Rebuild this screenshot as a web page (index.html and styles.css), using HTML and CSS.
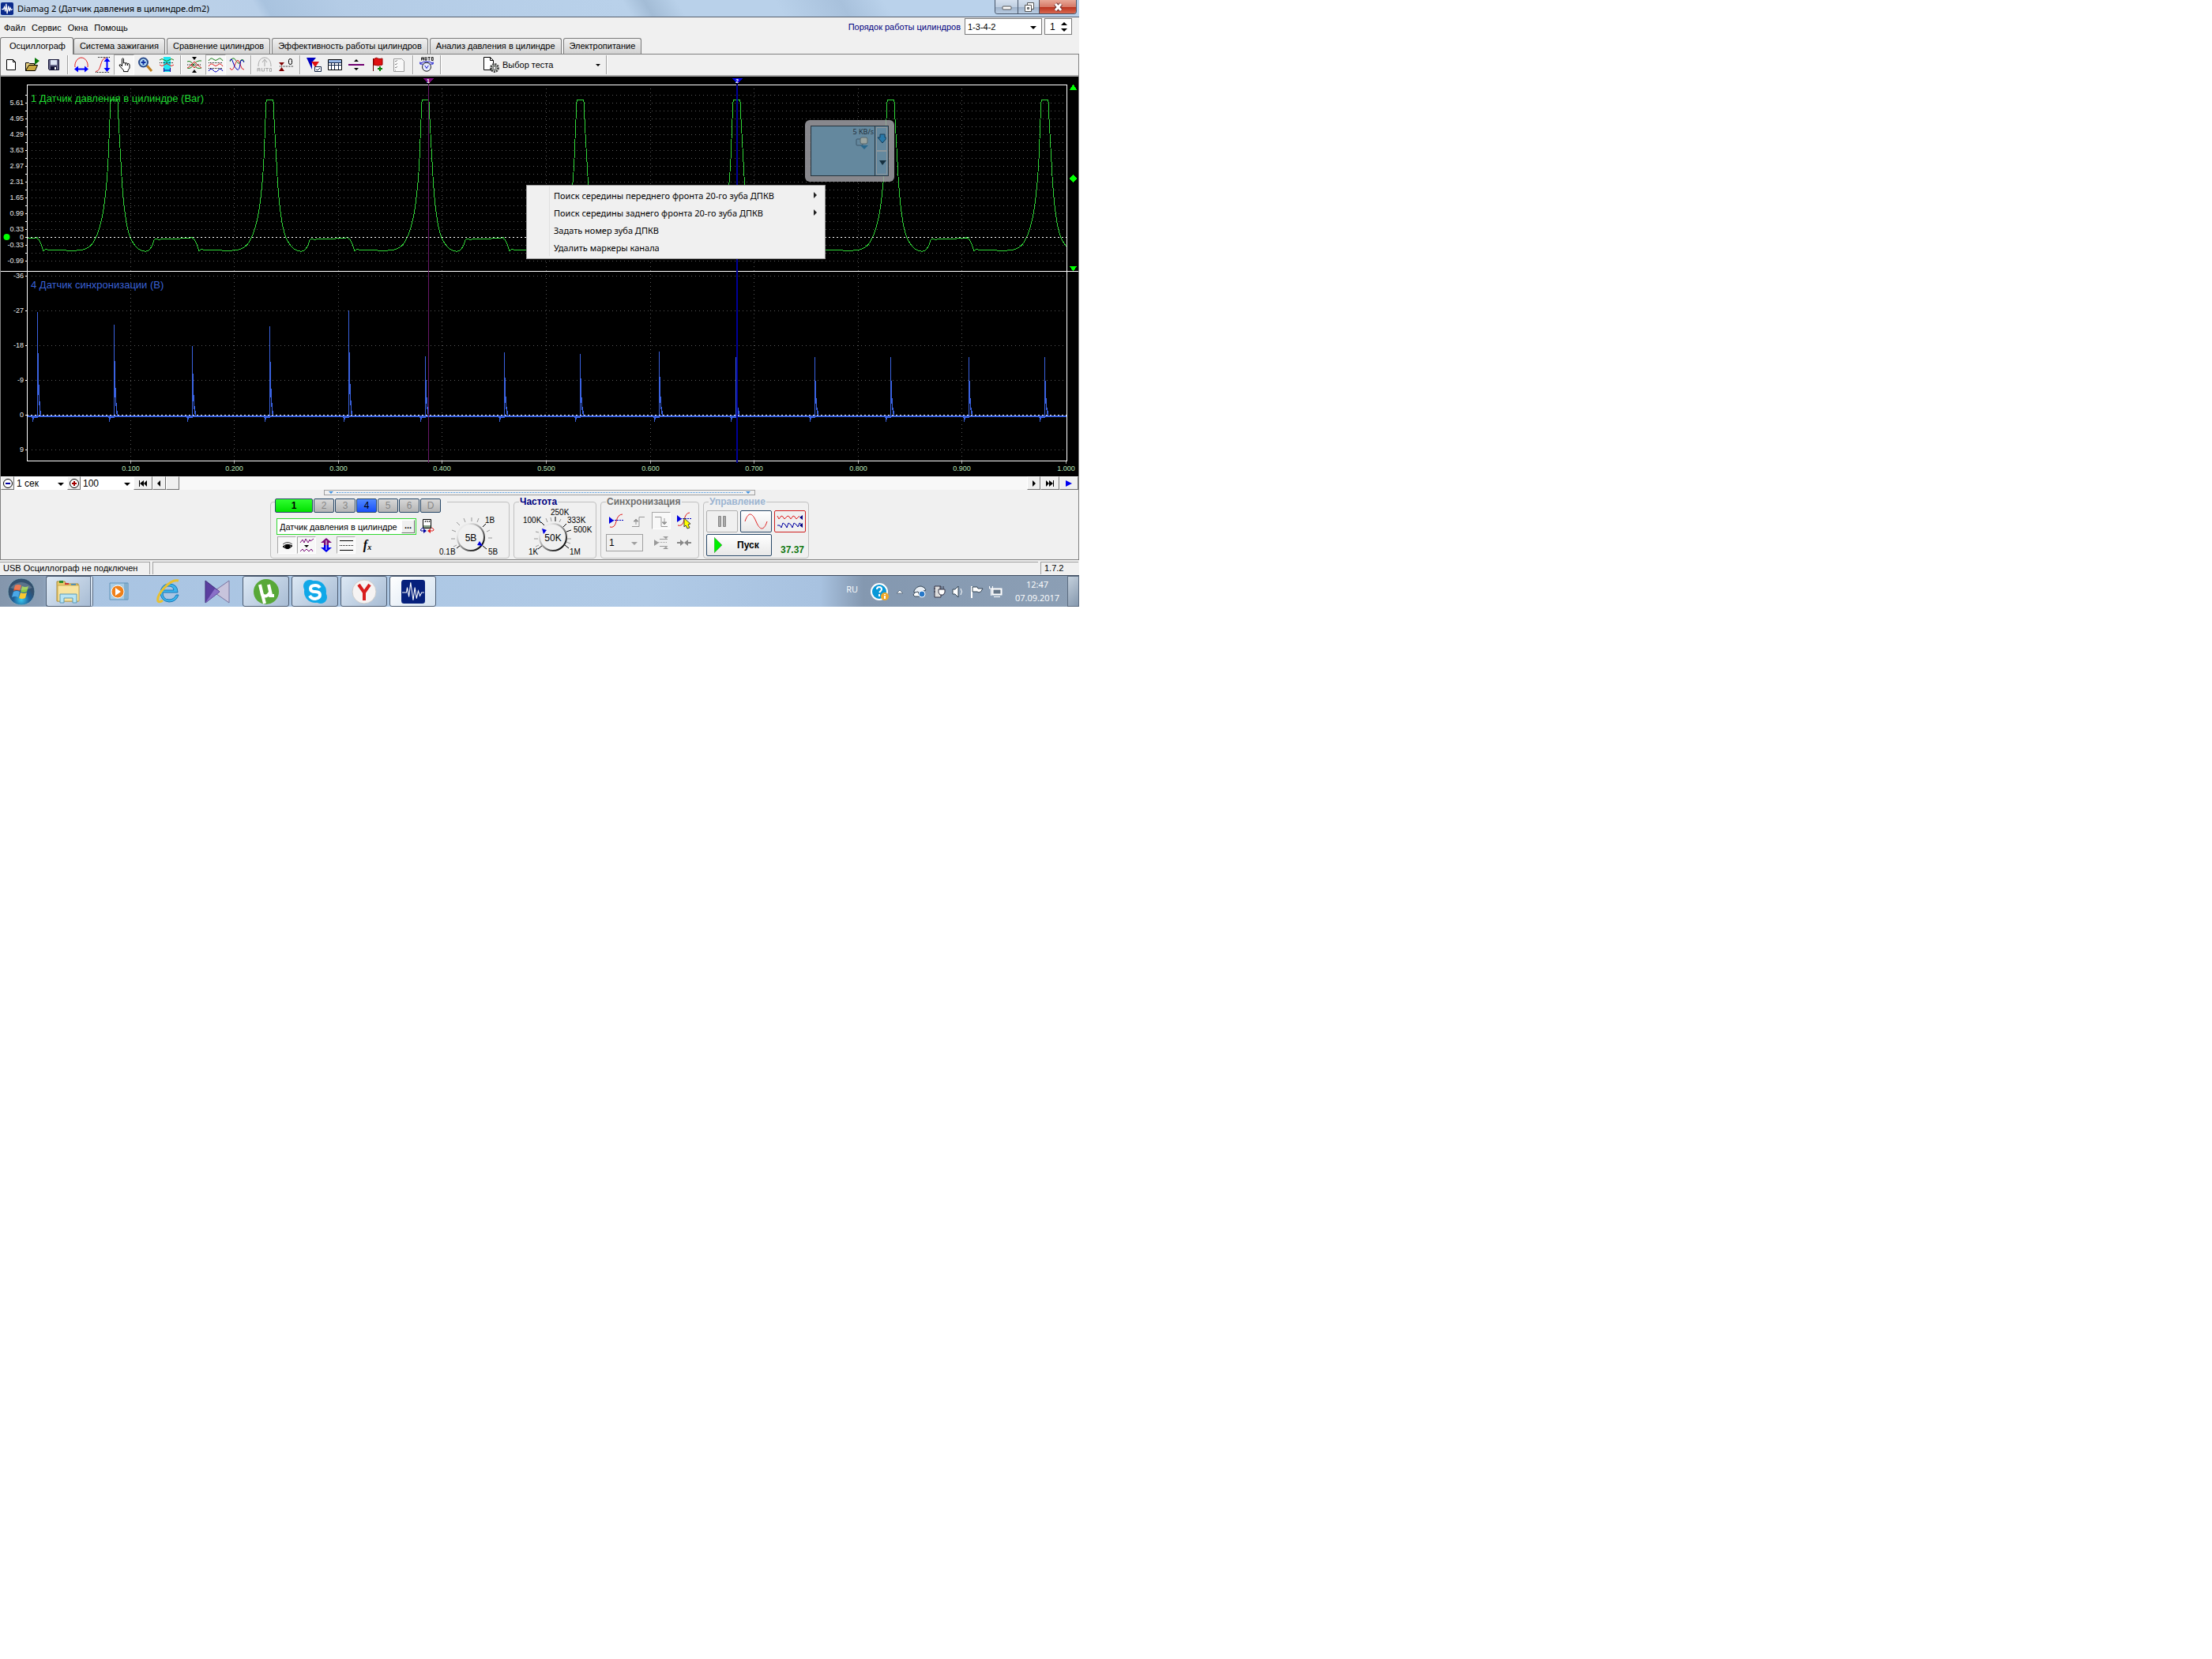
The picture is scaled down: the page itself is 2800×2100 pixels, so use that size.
FILE: index.html
```html
<!DOCTYPE html>
<html lang="ru">
  <head>
    <meta charset="UTF-8" />
    <title>Diamag 2</title>
    <link rel="stylesheet" href="styles.css">
  </head>

  <body>
    <div class="desktop">
      <div class="titleBar">
        <svg class="appIcon" width="16" height="16" viewBox="0 0 28 28">
          <rect width="28" height="28" rx="3" fill="#0a2a8c" />
          <path d="M2 15h4l2-5 2 10 2-17 2 22 3-17 2 12 2-8 2 5 3-2" fill="none" stroke="#fff" stroke-width="2" />
        </svg>
        <div class="titleText">Diamag 2 (Датчик давления в цилиндре.dm2)</div>
        <div class="winButtons">
          <button class="winMin" aria-label="Свернуть"><svg width="13" height="11"><rect x="1" y="5" width="11" height="4" rx="1" fill="#fff" stroke="#555" /></svg></button>
          <button class="winMax" aria-label="Развернуть"><svg width="13" height="12"><path d="M4.500 .500h8v8h-8z" fill="#fff" stroke="#555" /><path d="M1.500 3.500h8v8h-8z" fill="#fff" stroke="#555" /><path d="M4.500 6.500h2v2h-2z" fill="#9ab" stroke="#555" /></svg></button>
          <button class="winClose" aria-label="Закрыть"><svg width="13" height="12"><path d="M3 2l7 8M10 2l-7 8" stroke="#6a3030" stroke-width="5" /><path d="M3 2l7 8M10 2l-7 8" stroke="#fff" stroke-width="3" /></svg></button>
        </div>
      </div>

      <div class="menuBar">
        <div class="menuItems">
          <a href="#">Файл</a>
          <a href="#">Сервис</a>
          <a href="#">Окна</a>
          <a href="#">Помощь</a>
        </div>
        <label class="orderLabel" for="order">Порядок работы цилиндров</label>
        <div class="selectBox orderBox">
          <select id="order"><option>1-3-4-2</option></select>
        </div>
        <div class="spinBox">
          <input type="text" value="1" aria-label="Номер цилиндра" />
          <svg width="8" height="14"><path d="M0 5l4-4 4 4zM0 9l4 4 4-4z" fill="#000" /></svg>
        </div>
      </div>

      <div class="tabs">
        <button class="tab active">Осциллограф</button>
        <button class="tab">Система зажигания</button>
        <button class="tab">Сравнение цилиндров</button>
        <button class="tab">Эффективность работы цилиндров</button>
        <button class="tab">Анализ давления в цилиндре</button>
        <button class="tab">Электропитание</button>
      </div>

      <div class="window">
        <div class="toolBar">
          <button class="tool" aria-label="Новый"><svg viewBox="0 0 20 20"><path d="M4.500 3.500h8l3 3v10h-11z" fill="#fff" stroke="#000" /><path d="M12.500 3.500v3h3" fill="none" stroke="#000" /></svg></button>
          <button class="tool" aria-label="Открыть"><svg viewBox="0 0 20 20"><path d="M1.500 17.500v-10h4l1 1h6v3" fill="#e8d080" stroke="#000" /><path d="M1.500 17.500l4-7h11l-3 7z" fill="#c8a840" stroke="#000" /><path d="M13 1v9l6-5z" fill="#087808" /></svg></button>
          <button class="tool" aria-label="Сохранить"><svg viewBox="0 0 20 20"><path d="M3.500 3.500h13v13h-12l-1-1z" fill="#668" stroke="#113" /><path d="M6 4h8v6H6z" fill="#dde4f4" /><path d="M6 12h8v4H6z" fill="#113" /><path d="M11 13h2v3h-2z" fill="#fff" /></svg></button>
          <div class="sep"></div>
          <button class="tool" aria-label="Период"><svg viewBox="0 0 20 20"><path d="M2 13c-1-6 3-12 8-12s9 6 8 12" fill="none" stroke="#e02020" /><path d="M3 15.500h14" stroke="#00f" stroke-width="2" /><path d="M1 15.500l5-4v8zM19 15.500l-5-4v8z" fill="#00f" /></svg></button>
          <button class="tool" aria-label="Амплитуда"><svg viewBox="0 0 20 20"><path d="M1 18.500c8 0 5-17 13-17" fill="none" stroke="#e02020" /><path d="M4 .500h15M1 19.500h17" stroke="#000" stroke-dasharray="1 1" /><path d="M15.500 4v12" stroke="#00f" stroke-width="2" /><path d="M15.500 1l-4 5h8zM15.500 19l-4-5h8z" fill="#00f" /></svg></button>
          <button class="tool checked" aria-label="Рука"><svg viewBox="0 0 20 20"><path d="M7.500 12V2.500q1-1.500 2 0V8q1-1 2.500 0 1-.8 2.500.6 1.500-.5 2.500 1v4.500l-2 3v1.500H9.500V17l-5.500-6q0-2 2-1z" fill="#fff" stroke="#000" /><path d="M12 8v3M14.500 9v2" stroke="#000" /></svg></button>
          <button class="tool" aria-label="Лупа"><svg viewBox="0 0 20 20"><path d="M12 11l6 7" stroke="#c08020" stroke-width="3" /><circle cx="7.500" cy="7" r="5.500" fill="#b8e0f8" stroke="#2a4a8a" stroke-width="2" /><path d="M4.500 7h6M7.500 4v6" stroke="#1030a0" stroke-width="2" /></svg></button>
          <button class="tool" aria-label="Интервал"><svg viewBox="0 0 20 20"><path d="M6 0h9v19H6z" fill="#20e8f0" /><path d="M1 4q3-3 6 0t6 0 6 0" fill="none" stroke="#188018" /><path d="M1 10q3 3 6 0t6 0 6 0" fill="none" stroke="#e02020" /><path d="M1 7.500h18" stroke="#000" stroke-dasharray="1 1" /><path d="M6 17h9M6.500 14v5M14.500 14v5" stroke="#0000a0" /></svg></button>
          <div class="sep"></div>
          <button class="tool" aria-label="Центр"><svg viewBox="0 0 20 20"><path d="M1 6q4-2 8 4t10 4M1 14q4 2 8-4t10-5" fill="none" stroke="#188018" /><path d="M1 14q3-1 5-4l4-4 4 4 5 4M6 10l4 4 4-4" fill="none" stroke="#e02020" /><path d="M1 10h18" stroke="#000" stroke-dasharray="1 1" /><path d="M7 0h6l-3 4zM7 20h6l-3-4z" fill="#000" /></svg></button>
          <button class="tool checked" aria-label="Раздельно"><svg viewBox="0 0 20 20"><path d="M1 5q3-5 6-2t6 0 6 2" fill="none" stroke="#188018" /><path d="M1 12q3-5 6-2t6 0 6 2" fill="none" stroke="#e02020" /><path d="M1 18q3-5 6-1t6 0 6 1" fill="none" stroke="#0000c0" /><path d="M1 7.500h18M1 14.500h18" stroke="#000" stroke-dasharray="1 1" /></svg></button>
          <button class="tool" aria-label="Наложение"><svg viewBox="0 0 20 20"><path d="M1 6q4-8 8-1t6-1q3-2 4 2" fill="none" stroke="#188018" /><path d="M1 14q3 6 6-3t5-6 3 7 4 4" fill="none" stroke="#e02020" /><path d="M1 5q2-5 4 2t5 9 4-7 5-2" fill="none" stroke="#0000c0" /></svg></button>
          <div class="sep"></div>
          <button class="tool" aria-label="Авто"><svg viewBox="0 0 20 20"><path d="M2 12c0-7 3-11 8-11s8 4 8 11M10 4v8M7 7l3-4 3 4M1 18.500v-4h3v4M1 16.500h3M6.500 14v4h3v-4M11 14.500h4M13 14.500v4M16.500 14.500h2v4h-2z" fill="none" stroke="#a8a8a8" /></svg></button>
          <button class="tool" aria-label="Ноль"><svg viewBox="0 0 20 20"><path d="M1 7h7l-3.500 4zM1 18h7l-3.500-5z" fill="#800000" /><path d="M2 12h18" stroke="#000" stroke-dasharray="1 1" /><rect x="13.500" y="2.500" width="4" height="7" rx="2" fill="none" stroke="#000" /></svg></button>
          <div class="sep"></div>
          <button class="tool" aria-label="Маркеры"><svg viewBox="0 0 20 20"><path d="M1 1h12L8 7v9z" fill="#0000c0" /><path d="M7 6h10l-5 7z" fill="#e01010" /><path d="M11.500 12.500h8v6h-8z" fill="#fff" stroke="#124" /><path d="M13 16l2 1 3-3" fill="none" stroke="#124" /></svg></button>
          <button class="tool" aria-label="Таблица"><svg viewBox="0 0 20 20"><path d="M1.500 3.500h17v13h-17z" fill="#fff" stroke="#000" /><path d="M2 4h16v3H2z" fill="#98b8e8" /><path d="M1 7.500h18M1 10.500h18M5.500 7v9M9.500 7v9M14.500 7v9" stroke="#124" /></svg></button>
          <button class="tool" aria-label="Разделить"><svg viewBox="0 0 20 20"><path d="M0 9h20v2H0z" fill="#700070" /><path d="M7 6h6l-3-3zM7 14h6l-3 3z" fill="#000" /></svg></button>
          <button class="tool" aria-label="Флаг"><svg viewBox="0 0 20 20"><path d="M4.500 2v16" stroke="#600" /><path d="M5 3q4-3 5-1 3 1 6 0v8q-5 2-11 0z" fill="#e01010" stroke="#900" /><path d="M13 12v6M10 15h6" stroke="#088008" stroke-width="2" /></svg></button>
          <button class="tool" aria-label="Список"><svg viewBox="0 0 20 20"><path d="M3.500 2.500h10l3 3v13h-13z" fill="#f8f8f8" stroke="#999" /><path d="M5 5l1 1 2-2M5 9l1 1 2-2M5 13l1 1 2-2M5 17l1 0" fill="none" stroke="#888" /></svg></button>
          <div class="sep"></div>
          <button class="tool" aria-label="Авто вольт"><svg viewBox="0 0 20 22"><path d="M3 5V1h3v4M3 3h3M8 0v4.500h2V0M12 .500h3M13.500 .500V5M17 .500h2V5h-2z" fill="none" stroke="#000" /><circle cx="10" cy="14" r="6" fill="#e8ecff" stroke="#000" /><path d="M7.500 12l2.500 4 2.500-4" fill="none" stroke="#0000c0" /><path d="M1 9q9-5 18 0M1 7v3h4M19 7v3h-4" fill="none" stroke="#00c" /></svg></button>
          <div class="sep"></div>
          <button class="testButton" aria-haspopup="true">
            <svg width="20" height="20" viewBox="0 0 20 20"><path d="M.500 .500h8l4 4v12H.500z" fill="#fff" stroke="#000" /><path d="M8.500 .500v4h4" fill="none" stroke="#000" /><circle cx="14" cy="14" r="4.500" fill="#d8e0d8" stroke="#444" stroke-width="3" stroke-dasharray="2 1" /><circle cx="14" cy="14" r="2" fill="#fff" stroke="#444" /></svg>
            <span>Выбор теста</span>
          </button>
          <div class="sep"></div>
        </div>

        <div class="scope">
          <svg class="plot" viewBox="0 97 1364 506" shape-rendering="crispEdges">
            <defs>
              <clipPath id="plotClip"><rect x="34" y="107" width="1315" height="476" /></clipPath>
              <path id="cycle" d="M-101 300l5 3 3 6 3 9 3-3 4 2 4-1 5 1 6-1 7 1h13q18 0 24-16 12-22 16-100l2-50 1-22 1-3h7l1 3 1 22 3 54q4 84 14 100 8 14 18 13 6 0 10-14 3-3 6 0 3-2 8-1l19-1q13 0 16-2" />
            </defs>
            <g id="grid"></g>
            <g id="pressure" clip-path="url(#plotClip)"></g>
            <g id="sync" clip-path="url(#plotClip)"></g>
            <path d="M33 300.500h1316M33 525.500h1316" stroke="#fff" stroke-dasharray="2 3" />
            <path d="M33.500 583V107.500h1316V583M0 343.500h1364M33 583.500h1317" stroke="#fff" fill="none" />
            <path d="M541.500 107v479" stroke="#6a186a" />
            <path d="M932 107v479" stroke="#000098" stroke-width="2" />
            <path d="M534 99h15l-7.500 7z" fill="#780878" />
            <path d="M925 99h15l-7.500 7z" fill="#0000e0" />
            <text class="markNo" x="541" y="105">1</text>
            <text class="markNo" x="932" y="105">2</text>
            <path d="M1357.500 107l5 7h-10zM1357.500 343l5-6h-10zM1357.500 221l5 5-5 5-5-5z" fill="#00ff00" />
            <circle cx="7.500" cy="300" r="4" fill="#00ff00" shape-rendering="auto" />
            <text class="chTitle ch1" x="38" y="129">1 Датчик давления в цилиндре (Bar)</text>
            <text class="chTitle ch4" x="38" y="365">4 Датчик синхронизации (В)</text>
          </svg>

          <div class="gadget">
            <div class="gadgetScreen">
              <div class="gadgetSpeed">5 KB/s</div>
              <svg width="17" height="16"><rect x="1" y="3" width="8" height="8" rx="1" fill="none" stroke="#3c5668" /><rect x="6" y="1" width="9" height="8" rx="2" fill="#9aa4a0" stroke="#58686c" /><path d="M6 11h10l-5 5z" fill="#28678c" /></svg>
            </div>
            <div class="gadgetSide">
              <svg width="14" height="28"><path d="M4 8h6v4h3l-6 7-6-7h3z" fill="#2878a8" stroke="#143c58" /></svg>
              <svg width="14" height="28"><path d="M3 11h9l-5 6z" fill="#16303f" /></svg>
            </div>
          </div>

          <ul class="contextMenu">
            <li><a href="#">Поиск середины переднего фронта 20-го зуба ДПКВ</a><span class="more"></span></li>
            <li><a href="#">Поиск середины заднего фронта 20-го зуба ДПКВ</a><span class="more"></span></li>
            <li><a href="#">Задать номер зуба ДПКВ</a></li>
            <li><a href="#">Удалить маркеры канала</a></li>
          </ul>
        </div>

        <div class="scaleBar">
          <button class="scaleButton" aria-label="Уменьшить"><svg width="14" height="14"><circle cx="7" cy="7" r="5.500" fill="#fff" stroke="#000" /><path d="M4 7h6" stroke="#0000a0" stroke-width="2" /></svg></button>
          <div class="selectBox scaleBox"><select aria-label="Длительность"><option>1 сек</option></select></div>
          <button class="scaleButton" aria-label="Увеличить"><svg width="14" height="14"><circle cx="7" cy="7" r="5.500" fill="#fff" stroke="#000" /><path d="M4 7h6M7 4v6" stroke="#a00000" stroke-width="2" /></svg></button>
          <div class="selectBox scaleBox"><select aria-label="Масштаб"><option>100</option></select></div>
          <button class="scrollButton wide" aria-label="В начало"><svg width="12" height="8"><path d="M1 0h1v8H1zM2 4l5-4v8zM7 4l4-4v8z" fill="#000" /></svg></button>
          <button class="scrollButton" aria-label="Назад"><svg width="6" height="8"><path d="M0 4l4-4v8z" fill="#000" /></svg></button>
          <div class="scrollTrack"><div class="scrollThumb"></div></div>
          <button class="scrollButton" aria-label="Вперёд"><svg width="6" height="8"><path d="M5 4L1 0v8z" fill="#000" /></svg></button>
          <button class="scrollButton wide" aria-label="В конец"><svg width="12" height="8"><path d="M10 0h1v8h-1zM10 4L5 0v8zM5 4L1 0v8z" fill="#000" /></svg></button>
          <button class="scrollButton wide" aria-label="Проиграть"><svg width="10" height="8"><path d="M9 4L1 0v8z" fill="#0000f0" /></svg></button>
        </div>

        <div class="panel">
          <div class="splitter"><i></i><span></span><i></i></div>
          <div class="groups">
            <div class="group channelGroup">
              <div class="channelLeft">
                <div class="channels">
                  <button class="channel on1">1</button>
                  <button class="channel">2</button>
                  <button class="channel">3</button>
                  <button class="channel on4">4</button>
                  <button class="channel">5</button>
                  <button class="channel">6</button>
                  <button class="channel">D</button>
                </div>
                <div class="sensorRow">
                  <div class="sensorBox">
                    <input type="text" value="Датчик давления в цилиндре" aria-label="Датчик" />
                    <button class="dots" aria-label="Выбрать датчик">...</button>
                  </div>
                  <svg width="20" height="20"><path d="M4.500 1.500h10v11h-10z" fill="#fff" stroke="#000" /><path d="M5 9h9v3H5z" fill="#89a089" /><path d="M7 5l1-2M10 3v2M13 3l-1 2" stroke="#000" /><path d="M5 12q-5 2-3 4h4" fill="none" stroke="#0000a0" /><path d="M5 13l4 3-4 3z" fill="#0000a0" /><path d="M15 12q5 2 2 4h-3" fill="none" stroke="#e02020" /><path d="M14 13l-4 3 4 3z" fill="#e02020" /></svg>
                </div>
                <div class="viewRow">
                  <button class="view checked" aria-label="Показать"><svg width="20" height="20"><path d="M5 12q5-5 12-1-5 6-12 1z" fill="#555" stroke="#000" /><circle cx="11" cy="12" r="3" fill="#000" /><path d="M5 9q6-5 12 0" fill="none" stroke="#444" /></svg></button>
                  <button class="view checked" aria-label="Фильтр"><svg width="20" height="20"><path d="M2 7l3-4 2 4 2-5 3 5 2-4 1 2 4-3M2 18l3-3 2 3 3-3 3 3 3-3 2 3" fill="none" stroke="#780878" /><path d="M7 10h6l-3 3z" fill="#000" /></svg></button>
                  <button class="view" aria-label="Инверсия"><svg width="20" height="20"><path d="M10 1l7 6h-4v3H7V7H3z" fill="#780878" /><path d="M10 19l7-6h-4v-3H7v3H3z" fill="#0000f0" /><path d="M10 4v12" stroke="#fff" /></svg></button>
                  <button class="view checked" aria-label="Линии"><svg width="20" height="20"><path d="M2 4.500h17M2 16.500h17" stroke="#000" /><path d="M2 10.500h17" stroke="#000" stroke-dasharray="1 1" /></svg></button>
                  <button class="view fx">f<small>x</small></button>
                </div>
              </div>
              <svg class="knob" width="92" height="69" viewBox="553 636 92 69">
                <defs>
                  <linearGradient id="knobRing" x1="0" y1="0" x2="1" y2="1">
                    <stop offset="0.2" stop-color="#e8e8e8" /><stop offset="0.6" stop-color="#777" /><stop offset="0.9" stop-color="#000" />
                  </linearGradient>
                </defs>
                <g stroke="#999"><path d="M578 690l-4 2M576 682h-5M577 673l-5-2M582 665l-4-4M589 661l-2-5M597 660v-5M604 661l2-5M616 673l4-2M618 681h5" /></g>
                <path d="M611 667l4-4M578 694l5-4M611 691l5 4" stroke="#000" />
                <circle cx="596" cy="680" r="17" fill="#f0f0f0" stroke="url(#knobRing)" stroke-width="2" />
                <path d="M604 690l3-5 4 6z" fill="#0000e0" />
                <text class="knobValue" x="596" y="685">5B</text>
                <text x="614" y="662">1B</text><text x="556" y="702">0.1B</text><text x="618" y="702">5B</text>
              </svg>
            </div>

            <fieldset class="group freqGroup">
              <legend>Частота</legend>
              <svg class="knob" width="103" height="63" viewBox="651 642 103 63">
                <g stroke="#999"><path d="M682 690l-4 2M681 682h-5M682 674l-4-1M693 661l-2-5M698 660l-1-5M708 661l2-4M718 682h5M717 686l5 2" /></g>
                <path d="M703 660v-6M713 667l4-4M717 673l6-2M715 690l5 4M689 665l-4-4M687 690l-6 5" stroke="#000" />
                <circle cx="700" cy="680" r="17" fill="#f0f0f0" stroke="url(#knobRing)" stroke-width="2" />
                <path d="M686 669l6 2-4 5z" fill="#0000e0" />
                <text class="knobValue" x="700" y="685">50K</text>
                <text x="662" y="662">100K</text><text x="697" y="652">250K</text><text x="718" y="662">333K</text><text x="726" y="674">500K</text><text x="721" y="702">1M</text><text x="669" y="702">1K</text>
              </svg>
            </fieldset>

            <fieldset class="group syncGroup">
              <legend>Синхронизация</legend>
              <button class="sync" aria-label="Порог"><svg width="20" height="20"><path d="M3 18q6 2 8-7t8-9" fill="none" stroke="#e02020" /><path d="M6 9.500h14" stroke="#0000c0" stroke-dasharray="2 1" /><path d="M2 5v9l6-4z" fill="#0000e0" /></svg></button>
              <button class="sync" aria-label="По фронту"><svg width="20" height="20"><path d="M2 17.500h9v-12h7" fill="none" stroke="#999" /><path d="M7 8v7M4 11l3-3 3 3z" fill="#999" stroke="#999" /></svg></button>
              <button class="sync checked" aria-label="По спаду"><svg width="20" height="20"><path d="M2 5.500h8v12h8" fill="none" stroke="#999" /><path d="M14 7v7M11 12l3 3 3-3z" fill="#999" stroke="#999" /></svg></button>
              <button class="sync" aria-label="Указать порог"><svg width="20" height="22"><path d="M2 17q6 2 8-7t7-9" fill="none" stroke="#e02020" /><path d="M5 8.500h14" stroke="#0000c0" stroke-dasharray="2 1" /><path d="M1 4v9l6-4z" fill="#0000e0" /><path d="M10 8l8 7-3 1 2 4-3 1-2-4-2 2z" fill="#ffff00" stroke="#443" /></svg></button>
              <div class="selectBox syncBox"><select aria-label="Канал синхронизации" disabled><option>1</option></select></div>
              <button class="sync" aria-label="Уровень"><svg width="20" height="20"><path d="M8 5.500h10M8 14.500h10" stroke="#999" /><path d="M6 9.500h12" stroke="#999" stroke-dasharray="1 1" /><path d="M1 6v8l6-4zM12 2h7l-3 3zM12 18h7l-3-3z" fill="#999" /></svg></button>
              <button class="sync" aria-label="Сжать"><svg width="20" height="20"><path d="M1 10h6M13 10h6" stroke="#888" stroke-width="2" /><path d="M5 6v8l5-4zM15 6v8l-5-4z" fill="#888" /></svg></button>
            </fieldset>

            <fieldset class="group controlGroup">
              <legend>Управление</legend>
              <button class="ctl" aria-label="Пауза" disabled><svg width="12" height="16"><path d="M1.500 1.500h3v13h-3zM7.500 1.500h3v13h-3z" fill="#aaa" stroke="#888" /></svg></button>
              <button class="ctl active" aria-label="Синус"><svg width="30" height="22"><path d="M1 11C5-1 10-1 15 11s10 12 14 0" fill="none" stroke="#e02020" /></svg></button>
              <button class="ctl red" aria-label="Многоканальный"><svg width="34" height="20"><path d="M1 3l2 4 3-4 2 1 2 3 4-4 2 1 2 3 3-4 2 1 2 3 4-4" fill="none" stroke="#e02020" /><path d="M1 15h3l2 3 2-6 3 2 2 4 2-6 3 2 2 4 2-6 3 2 2 3 2-5 3 2" fill="none" stroke="#0000a0" /><path d="M33 2v6l-4-3zM33 12v6l-4-3z" fill="#000080" /></svg></button>
              <button class="ctl active start"><svg width="10" height="20"><path d="M0 0v20l10-10z" fill="#00f000" stroke="#7a7" /></svg><span>Пуск</span></button>
              <div class="counter">37.37</div>
            </fieldset>
          </div>
        </div>
      </div>

      <div class="statusBar">
        <div class="statusText">USB Осциллограф не подключен</div>
        <div class="statusEmpty"></div>
        <div class="statusVersion">1.7.2</div>
      </div>

      <div class="taskBar">
        <button class="startButton" aria-label="Пуск">
          <svg width="36" height="38"><defs><radialGradient id="orb" cx="0.5" cy="0.8"><stop offset="0" stop-color="#38c8f0" /><stop offset="0.6" stop-color="#1f5f98" /><stop offset="1" stop-color="#33506e" /></radialGradient></defs><circle cx="18" cy="19" r="17" fill="url(#orb)" stroke="#8ab" /><path d="M10 11q4-2 8 0l-2 7q-4-2-8 0z" fill="#e8582a" /><path d="M19 12q4 2 8 0l-2 7q-4 2-8 0z" fill="#8cc63e" /><path d="M8 19q4-2 8 0l-2 7q-4-2-8 0z" fill="#4aa8e8" /><path d="M17 20q4 2 8 0l-2 7q-4 2-8 0z" fill="#fbc82e" /><path d="M4 14q14-14 28 0Q18 20 4 14z" fill="#fff" opacity=".2" /></svg>
        </button>
        <button class="task running stacked" aria-label="Проводник"><svg width="34" height="32"><path d="M2 3h10l2 3h15v22H2z" fill="#e9c96a" stroke="#a88a3a" /><path d="M5 2h5v3H5z" fill="#2a8a2a" /><path d="M12 5h5v2h-5z" fill="#c33" /><path d="M20 6h6v2h-6z" fill="#38c" /><path d="M3 8h27v20H3z" fill="#f8e4a0" stroke="#c8a850" /><path d="M6 30V19h21v11h-5v-6H11v6z" fill="#b8e4f4" stroke="#5a9ab8" /></svg></button>
        <button class="task" aria-label="Проигрыватель"><svg width="30" height="30"><path d="M3 4h23v21H3z" fill="#a8cce4" stroke="#5f92b8" /><path d="M22 4v21M24 4v21" stroke="#5f92b8" /><circle cx="13" cy="15" r="8" fill="#f08018" stroke="#fff" /><path d="M10 10v10l7-5z" fill="#fff" /></svg></button>
        <button class="task" aria-label="Internet Explorer"><svg width="32" height="32"><path d="M26 20q-3 6-9 6-8 0-8-9h19q0-11-11-11-9 0-11 10 0 12 11 13 9 0 12-9zM10 14q1-5 7-5 5 0 6 5z" fill="#3cb4ec" stroke="#1878b8" /><path d="M29 2q-8-2-18 9T3 28q2 2 6-1" fill="none" stroke="#e8c030" stroke-width="3" /></svg></button>
        <button class="task" aria-label="KMPlayer"><svg width="32" height="30"><path d="M31 1v28L11 15z" fill="#c8c4dc" stroke="#7a74a0" /><path d="M1 1v28l18-14z" fill="#5b3fa0" stroke="#3d2a78" /><path d="M1 29l18-14-6-4z" fill="#8a70c8" /></svg></button>
        <button class="task running" aria-label="uTorrent"><svg width="34" height="34"><circle cx="17" cy="17" r="16" fill="#58a838" /><path d="M9 8l3 13q5 4 9-2l1 3h5M20 8l3 13M12 20l3 12" fill="none" stroke="#fff" stroke-width="4" /></svg></button>
        <button class="task running" aria-label="Skype"><svg width="32" height="34"><circle cx="16" cy="17" r="14" fill="#10a8e8" /><circle cx="9" cy="10" r="8" fill="#10a8e8" /><circle cx="23" cy="24" r="8" fill="#10a8e8" /><path d="M22 12q-2-3-6-3-6 0-6 4t6 4 6 4-6 5q-5 0-7-4" fill="none" stroke="#fff" stroke-width="4" /></svg></button>
        <button class="task running" aria-label="Яндекс"><svg width="32" height="32"><circle cx="16" cy="16" r="15" fill="#f6f3f3" stroke="#ccc" /><path d="M9 7l7 10 7-10M16 16v11" fill="none" stroke="#d81c1c" stroke-width="4" /></svg></button>
        <button class="task running current" aria-label="Diamag 2"><svg width="30" height="30" viewBox="0 0 28 28"><rect width="28" height="28" rx="3" fill="#06207c" /><path d="M1 15h5l1-6 2 11 2-17 3 21 2-15 2 13 2-9 2 6 2-4h3" fill="none" stroke="#fff" stroke-width="1" /></svg></button>

        <div class="tray">
          <div class="lang">RU</div>
          <svg class="help" width="24" height="24"><circle cx="11" cy="12" r="10" fill="#0898d8" stroke="#fff" stroke-width="2" /><path d="M8 9q0-3 3-3t3 3q0 1-3 4M11 15v3" fill="none" stroke="#fff" stroke-width="2" /><circle cx="18" cy="18" r="5" fill="#f0a828" /><path d="M18 15v1M18 17v4" stroke="#fff" stroke-width="2" /></svg>
          <svg class="caret" width="8" height="20"><path d="M0 12l4-4 4 4z" fill="#fff" stroke="#678" /></svg>
          <svg width="18" height="20"><path d="M2 9q3-6 9-6 5 1 6 5l-8 3H2z" fill="#e8eef4" stroke="#345" /><path d="M1 14q1-4 6-4l2 6H3z" fill="#fff" stroke="#345" /><circle cx="12" cy="13" r="4" fill="#2878c8" stroke="#fff" /></svg>
          <svg width="18" height="20"><path d="M4 3h8v14H4zM3 6h2M3 10h2" fill="#ddd" stroke="#334" /><path d="M9 7h8v4l-2 3h-4l-2-3zM11 3v4M15 3v4" fill="#fff" stroke="#334" /></svg>
          <svg width="18" height="20"><path d="M3 7h3l4-4v14l-4-4H3z" fill="#fff" stroke="#345" /><path d="M13 6q3 4 0 8" fill="none" stroke="#fff" /></svg>
          <svg width="18" height="20"><path d="M3 3v15" stroke="#fff" stroke-width="2" /><path d="M4 4h6l1 2h6q-2 5-5 5l-2-1H4z" fill="#fff" stroke="#345" /></svg>
          <svg width="18" height="20"><path d="M5.500 6.500h11v7h-11z" fill="#678" stroke="#fff" stroke-width="2" /><path d="M7 16.500h8" stroke="#fff" /><path d="M1.500 3v3h4V3M3.500 6v9" fill="none" stroke="#fff" /></svg>
          <div class="clock">12:47<br>07.09.2017</div>
          <button class="showDesktop" aria-label="Свернуть все окна"></button>
        </div>
      </div>
    </div>
    <script type="text/javascript" src="scope.js"></script>
  </body>
</html>
```

FILE: styles.css
```css
body,
ul,
li,
fieldset {
  margin: 0;
  padding: 0;
}

body {
  background: #ffffff;
  font-family: "Liberation Sans", Arial, sans-serif;
  font-size: 11px;
  color: #000000;
}

* {
  box-sizing: border-box;
}

button,
input,
select {
  margin: 0;
  padding: 0;
  border: 0;
  background: none;
  font-family: inherit;
  font-size: inherit;
  color: inherit;
}

svg {
  display: block;
  flex: none;
}

a {
  color: inherit;
  text-decoration: none;
}

.desktop {
  max-width: 1366px;
  background: #f0f0f0;
}

/* заголовок окна */
.titleBar {
  display: flex;
  align-items: flex-start;
  height: 22px;
  padding-left: 1px;
  background: linear-gradient(60deg, #c4d6ea 0, #b8cfe8 24%, #a9c3df 25%, #b4cce6 32%, #b9d1ea 58%, #a3bcd6 60%, #b9d1ea 63%, #b9d1ea 72%, #a8c1dc 78%, #bad2eb 82%);
  border-bottom: 1px solid #56606e;
}

.appIcon {
  margin-top: 3px;
}

.titleText {
  flex: 1;
  padding-left: 5px;
  line-height: 22px;
  font-family: "Noto Sans", sans-serif;
}

.winButtons {
  display: flex;
  height: 18px;
  margin-right: 3px;
  border: 1px solid #48566a;
  border-top: 0;
  border-radius: 0 0 4px 4px;
  overflow: hidden;
}

.winButtons button {
  display: flex;
  align-items: center;
  justify-content: center;
  width: 28px;
  background: linear-gradient(#d4e0ee 0, #c0cfe2 50%, #9db0c8 51%, #b8cce2);
}

.winButtons .winMax {
  width: 27px;
  border-left: 1px solid #48566a;
}

.winButtons .winClose {
  width: 47px;
  border-left: 1px solid #48566a;
  background: linear-gradient(#e8a898 0, #d67a68 50%, #b8301c 51%, #d86850);
}

/* меню */
.menuBar {
  display: flex;
  align-items: flex-start;
  height: 25px;
  padding: 1px 9px 0 5px;
}

.menuItems {
  display: flex;
  flex: 1;
  gap: 8px;
  line-height: 24px;
}

.orderLabel {
  padding-right: 5px;
  line-height: 22px;
  color: #000080;
}

.selectBox {
  position: relative;
  background: #ffffff;
}

.selectBox select {
  display: block;
  width: 100%;
  height: 100%;
  padding-left: 3px;
  appearance: none;
  font-size: 12px;
}

.selectBox::after {
  content: "";
  position: absolute;
  right: 6px;
  top: 50%;
  margin-top: -1px;
  border: 4px solid transparent;
  border-top-color: #000000;
  border-bottom: 0;
  pointer-events: none;
}

.orderBox,
.spinBox {
  height: 21px;
  border: 1px solid #7a7a7a;
}

.orderBox {
  width: 98px;
}

.orderBox select {
  font-size: 11px;
}

.spinBox {
  display: flex;
  align-items: center;
  width: 35px;
  margin-left: 3px;
  background: #ffffff;
}

.spinBox input {
  width: 20px;
  padding-left: 6px;
  font-size: 12px;
}

/* вкладки */
.tabs {
  display: flex;
  align-items: flex-end;
  gap: 2px;
  height: 21px;
}

.tab {
  height: 20px;
  padding: 0 7px 1px;
  border: 1px solid #7a7a7a;
  border-bottom: 0;
  border-radius: 3px 3px 0 0;
  background: linear-gradient(#f0f0f0, #d2d2d2);
  white-space: nowrap;
}

.tab.active {
  height: 22px;
  margin: 0 -2px -1px 0;
  padding: 0 9px 2px 11px;
  background: #f0f0f0;
}

.window {
  border: 1px solid #808080;
}

/* панель инструментов */
.toolBar {
  display: flex;
  align-items: center;
  height: 28px;
  border-bottom: 2px solid #a8a8a8;
}

.tool {
  display: flex;
  align-items: center;
  justify-content: center;
  width: 26px;
  height: 26px;
  margin-right: 1px;
}

.tool svg {
  width: 20px;
  height: 20px;
}

.checked {
  border: 1px solid #a8a8a8;
  border-right-color: #ffffff;
  border-bottom-color: #ffffff;
  background: #f8f8f8;
}

.sep {
  width: 2px;
  height: 24px;
  margin: 0 3px;
  border-left: 1px solid #a0a0a0;
  border-right: 1px solid #ffffff;
}

.testButton {
  display: flex;
  flex: none;
  align-items: center;
  gap: 4px;
  width: 202px;
  height: 24px;
  padding-left: 50px;
}

.testButton::after {
  content: "";
  margin: 0 4px 0 auto;
  border: 3px solid transparent;
  border-top-color: #000000;
  border-bottom: 0;
}

/* экран осциллографа */
.scope {
  position: relative;
  background: #000000;
}

.plot {
  width: 100%;
  height: auto;
}

.plot text {
  font-size: 9px;
  fill: #e8e8e8;
}

.plot .yLabel {
  text-anchor: end;
}

.plot .xLabel {
  text-anchor: middle;
  fill: #b8e0b8;
}

.plot .markNo {
  font-size: 7px;
  font-weight: bold;
  text-anchor: middle;
  fill: #ffffff;
}

.plot .chTitle {
  font-size: 13px;
}

.plot .ch1 {
  fill: #22dd33;
}

.plot .ch4 {
  fill: #3a62d8;
}

.gadget {
  position: absolute;
  left: 1018px;
  top: 55px;
  display: flex;
  width: 113px;
  height: 78px;
  padding: 7px;
  border-radius: 6px;
  background: rgba(160, 160, 166, 0.85);
}

.gadgetScreen {
  flex: 1;
  padding: 1px 1px 0 0;
  border: 1px solid #26333c;
  border-right: 0;
  background: #64889e;
}

.gadgetScreen svg {
  margin: 0 6px 0 auto;
}

.gadgetSpeed {
  text-align: right;
  font-family: "Open Sans", sans-serif;
  font-size: 9px;
  line-height: 12px;
  color: #1c2b35;
}

.gadgetSide {
  width: 18px;
  padding: 1px;
  border: 1px solid #26333c;
  background: #64889e;
}

.gadgetSide svg {
  height: 30px;
  border: 1px solid #8e979c;
}

.contextMenu {
  position: absolute;
  left: 665px;
  top: 137px;
  width: 379px;
  padding: 1px 2px 3px;
  border: 1px solid #979797;
  background: #f0f0f0;
  list-style: none;
  font-family: "Noto Sans", sans-serif;
}

.contextMenu li {
  display: flex;
  align-items: center;
  height: 22px;
  margin-left: 26px;
  padding: 0 8px 0 5px;
  border-left: 1px solid #e0e0e0;
}

.contextMenu a {
  flex: 1;
}

.more {
  border: 4px solid transparent;
  border-left-color: #222222;
  border-right: 0;
}

/* масштаб и прокрутка */
.scaleBar {
  display: flex;
  height: 17px;
}

.scaleButton,
.scrollButton,
.scrollThumb,
.dots {
  display: flex;
  align-items: center;
  justify-content: center;
  width: 17px;
  border: 1px solid #ffffff;
  border-right-color: #707070;
  border-bottom-color: #707070;
  background: #f0f0f0;
}

.scrollButton.wide {
  width: 24px;
}

.scaleBox {
  width: 67px;
}

.scaleBox::after {
  right: 4px;
}

.scrollTrack {
  flex: 1;
  background: #f8f8f8;
}

.scrollThumb {
  height: 17px;
}

/* нижняя панель */
.panel {
  padding-bottom: 1px;
}

.splitter {
  display: flex;
  align-items: center;
  gap: 4px;
  width: 40%;
  height: 7px;
  margin: 0 auto;
  padding: 0 5px;
  border: 1px solid #a0a0a0;
}

.splitter span {
  flex: 1;
  border-top: 1px dotted #3c90e0;
}

.splitter i {
  border: 3px solid transparent;
  border-top-color: #3c90e0;
  border-bottom: 0;
}

.groups {
  display: flex;
  justify-content: center;
  align-items: flex-end;
  gap: 5px;
  margin-top: 1px;
}

.group {
  height: 79px;
  border: 1px solid #c0c0c0;
  border-radius: 4px;
}

.group legend {
  height: 14px;
  margin-left: 6px;
  padding: 0 1px;
  line-height: 14px;
  font-weight: bold;
  font-size: 12px;
}

.channelGroup {
  display: flex;
  width: 303px;
  height: 72px;
  padding-left: 5px;
}

.channelLeft {
  width: 205px;
  margin-top: -5px;
}

.channels {
  display: flex;
  gap: 1px;
  width: 218px;
  background: #f0f0f0;
}

.channel {
  width: 26px;
  height: 18px;
  border: 1px solid #284868;
  border-radius: 2px;
  background: linear-gradient(#d8d8d8, #b4b4b4);
  color: #888888;
  font-size: 12px;
}

.channel.on1 {
  width: 48px;
  background: linear-gradient(#30ff30, #00e000);
  color: #000000;
  font-weight: bold;
}

.channel.on4 {
  background: linear-gradient(#5088ff, #1850f8);
  color: #000000;
}

.sensorRow {
  display: flex;
  gap: 4px;
  margin: 7px 0 2px 2px;
}

.sensorBox {
  display: flex;
  width: 177px;
  height: 21px;
  padding: 1px;
  border: 1px solid #30d830;
  background: #ffffff;
}

.sensorBox input {
  flex: 1;
  min-width: 0;
  padding-left: 2px;
}

.dots {
  padding-bottom: 4px;
  font-weight: bold;
}

.viewRow {
  display: flex;
  gap: 1px;
  margin-left: 3px;
}

.view,
.sync {
  display: flex;
  align-items: center;
  justify-content: center;
  width: 24px;
  height: 22px;
}

.fx {
  padding-left: 4px;
  font-family: "Liberation Serif", serif;
  font-size: 16px;
  font-style: italic;
  font-weight: bold;
}

.fx small {
  font-size: 10px;
  padding-top: 4px;
}

.knob text {
  font-size: 10px;
}

.knob .knobValue {
  font-size: 12px;
  text-anchor: middle;
}

.freqGroup {
  width: 105px;
}

.freqGroup legend {
  color: #000080;
}

.syncGroup {
  display: grid;
  grid-template-columns: repeat(4, 24px);
  justify-content: center;
  align-content: start;
  gap: 6px 5px;
  width: 125px;
  padding-top: 6px;
}

.syncGroup legend {
  color: #707070;
}

.syncBox {
  grid-column: span 2;
  width: 47px;
  border: 1px solid #a0a0a0;
  background: #f0f0f0;
}

.syncBox select {
  color: #000000;
  opacity: 1;
}

.syncBox::after {
  border-top-color: #a0a0a0;
}

.controlGroup {
  display: grid;
  grid-template-columns: repeat(3, 40px);
  align-content: start;
  gap: 2px 3px;
  width: 134px;
  padding: 4px 0 0 3px;
}

.controlGroup legend {
  margin-left: 3px;
  color: #9cb4d0;
}

.ctl {
  display: flex;
  align-items: center;
  justify-content: center;
  height: 28px;
  border: 1px solid #b0b0b0;
  border-radius: 2px;
}

.ctl.active {
  border-color: #284868;
  background: linear-gradient(#ffffff, #e8e8e8);
}

.ctl.red {
  border-color: #d02020;
}

.ctl.start {
  grid-column: span 2;
  justify-content: flex-start;
  gap: 19px;
  padding-left: 9px;
  font-size: 12px;
  font-weight: bold;
}

.counter {
  padding: 13px 2px 0 0;
  text-align: right;
  font-size: 12px;
  font-weight: bold;
  color: #107810;
}

/* строка состояния */
.statusBar {
  display: flex;
  gap: 3px;
  height: 19px;
  padding: 2px 1px 1px 0;
  line-height: 15px;
}

.statusBar div {
  padding-left: 4px;
  border-top: 1px solid #a0a0a0;
}

.statusText {
  width: 190px;
  border-right: 1px solid #a0a0a0;
  white-space: nowrap;
}

.statusEmpty {
  flex: 1;
  border-left: 1px solid #a0a0a0;
}

.statusVersion {
  width: 48px;
  border-left: 1px solid #a0a0a0;
}

/* панель задач */
.taskBar {
  display: flex;
  height: 40px;
  border-top: 1px solid #3e4c60;
  background: linear-gradient(90deg, #8496ac 0, #8c9fb6 4%, #a9c4e2 5%, #b0cae6 60%, #a8c2e0 76%, #8498b0 80%, #8c9fb5);
}

.startButton {
  padding-left: 9px;
  width: 58px;
}

.task {
  display: flex;
  align-items: center;
  justify-content: center;
  width: 59px;
  margin-right: 3px;
  border: 1px solid transparent;
  border-radius: 3px;
}

.task.running {
  border-color: #4c5c72;
  background: linear-gradient(135deg, #dce8f4, #a8bcd4);
}

.task.stacked {
  width: 60px;
  border-right: 4px double #5c6c82;
}

.task.current {
  background: linear-gradient(135deg, #ffffff, #d4e2f0);
}

.tray {
  display: flex;
  align-items: center;
  gap: 6px;
  margin-left: auto;
  font-family: "Open Sans", sans-serif;
  color: #ffffff;
}

.lang {
  padding: 0 10px 6px 0;
}

.help {
  margin-right: 3px;
}

.caret {
  margin-right: 6px;
}

.clock {
  width: 64px;
  margin-left: 6px;
  text-align: center;
  line-height: 17px;
  padding-bottom: 2px;
}

.showDesktop {
  align-self: stretch;
  width: 15px;
  border: 1px solid #5c6c80;
  background: linear-gradient(135deg, #c4d0dc, #8598ae);
}
```

FILE: scope.js
```js
var ns = 'http://www.w3.org/2000/svg'
var grid = document.getElementById('grid')
var pressure = document.getElementById('pressure')
var sync = document.getElementById('sync')

function add(parent, name, attrs, text) {
  var el = document.createElementNS(ns, name)
  for (var key in attrs) {
    el.setAttribute(key, attrs[key])
  }
  if (text) {
    el.textContent = text
  }
  parent.appendChild(el)
}

function dots(d) {
  add(grid, 'path', { d: d, stroke: '#585858', 'stroke-dasharray': '1 4' })
}

//сетка и шкала давления
for (var y = 120; y <= 330; y += 10) {
  dots('M39 ' + (y + 0.5) + 'H1349')
  add(grid, 'path', { d: 'M31 ' + (y + 0.5) + 'h3', stroke: '#fff' })
}
var bars = [['5.61', 130], ['4.95', 150], ['4.29', 170], ['3.63', 190], ['2.97', 210], ['2.31', 230], ['1.65', 250], ['0.99', 270], ['0.33', 290], ['0', 300], ['-0.33', 310], ['-0.99', 330]]
bars.forEach(function (b) {
  add(grid, 'text', { class: 'yLabel', x: 29, y: b[1] + 3 }, b[0])
})

//сетка и шкала синхронизации
var volts = [['-36', 349], ['-27', 393], ['-18', 437], ['-9', 481], ['0', 525], ['9', 569]]
volts.forEach(function (v) {
  dots('M39 ' + (v[1] + 0.5) + 'H1349')
  add(grid, 'path', { d: 'M31 ' + (v[1] + 0.5) + 'h3', stroke: '#fff' })
  add(grid, 'text', { class: 'yLabel', x: 29, y: v[1] + 3 }, v[0])
})

//ось времени
for (var i = 1; i <= 10; i++) {
  var x = Math.round(33 + i * 131.6) - 0.5
  if (i < 10) {
    dots('M' + x + ' 112V583')
  }
  add(grid, 'path', { d: 'M' + x + ' 583v4', stroke: '#aaa' })
  add(grid, 'text', { class: 'xLabel', x: x, y: 596 }, (i / 10).toFixed(3))
}

//кривая давления
var peaks = [-52, 144, 341, 538, 734, 932, 1127, 1322]
peaks.forEach(function (p) {
  add(pressure, 'use', { href: '#cycle', x: p, fill: 'none', stroke: '#30d838' })
})

//импульсы синхронизации: x, вершина
var pulses = [[47, 395], [144, 411], [243, 438], [341, 413], [441, 393], [538, 451], [638, 446], [734, 448], [834, 445], [931, 452], [1031, 452], [1127, 452], [1226, 452], [1322, 452]]
add(sync, 'path', { d: 'M34 527H1349', stroke: '#3a62e0', 'stroke-width': 2 })
pulses.forEach(function (p) {
  var h = 526 - p[1]
  var px = p[0] - 0.5
  var d = 'M' + px + ' 528V' + p[1] +
    'M' + (px + 1) + ' ' + (526 - Math.round(h * 0.6)) + 'V' + (526 - Math.round(h * 0.2)) +
    'M' + (px + 2) + ' ' + (526 - Math.round(h * 0.3)) + 'v' + Math.round(h * 0.2) +
    'M' + (px + 3) + ' ' + (526 - Math.round(h * 0.14)) + 'V524M' + (px + 4) + ' 520V527' +
    'M' + (px - 8) + ' 528.5h8M' + (px - 6) + ' 528V534M' + (px - 5) + ' 528V531'
  add(sync, 'path', { d: d, fill: 'none', stroke: '#3a62e0' })
})
```
